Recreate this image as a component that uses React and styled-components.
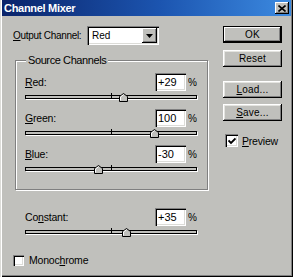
import React from 'react';
import styled, { createGlobalStyle } from 'styled-components';

const FACE = '#c0c0bc';

const Global = createGlobalStyle`
  html, body { margin: 0; padding: 0; background: ${FACE}; }
  body {
    font-family: "Liberation Sans", Arial, sans-serif;
    font-size: 10px;
    color: #000;
  }
  * { box-sizing: border-box; }
`;

const Window = styled.div`
  width: 293px;
  height: 277px;
  background: ${FACE};
  padding: 0 2px 2px 2px;
  box-shadow: inset 1px 0 0 #dcdcd8, inset 2px 0 0 #fff, inset -1px -1px 0 #000,
    inset -2px -2px 0 #808080;
  display: flex;
  flex-direction: column;
`;

const TitleBar = styled.div`
  height: 16px;
  flex: none;
  background: linear-gradient(90deg, #0a246a 0%, #1c55b0 55%, #3c8ae0 100%);
  display: flex;
  align-items: center;
  justify-content: space-between;
  padding: 0 2px 0 2px;
`;

const Title = styled.span`
  color: #fff;
  font-weight: bold;
  font-size: 11px;
  letter-spacing: -0.3px;
`;

const CloseBtn = styled.div`
  width: 14px;
  height: 12px;
  background: ${FACE};
  box-shadow: inset -1px -1px 0 #000, inset 1px 1px 0 #fff, inset -2px -2px 0 #808080;
  display: flex;
  align-items: center;
  justify-content: center;
`;

const Body = styled.div`
  flex: 1;
  display: flex;
`;

const LeftCol = styled.div`
  width: 218px;
  padding: 10px 0 0 11px;
  display: flex;
  flex-direction: column;
`;

const OutputRow = styled.div`
  display: flex;
  align-items: center;
  height: 19px;
`;

const OutputLabel = styled.span`
  width: 74px;
  letter-spacing: -0.3px;
`;

const Select = styled.div`
  width: 72px;
  height: 19px;
  background: #fff;
  box-shadow: inset 1px 1px 0 #808080, inset 2px 2px 0 #000, inset -1px -1px 0 #fff,
    inset -2px -2px 0 #dcdcd8;
  display: flex;
  align-items: center;
  padding: 2px 2px 2px 5px;
`;

const SelectText = styled.span`
  flex: 1;
  font-size: 10px;
`;

const ArrowBtn = styled.div`
  width: 15px;
  height: 15px;
  background: ${FACE};
  box-shadow: inset -1px -1px 0 #000, inset 1px 1px 0 #fff, inset -2px -2px 0 #808080;
  display: flex;
  align-items: center;
  justify-content: center;
`;

const GroupBox = styled.div`
  margin: 15px 0 0 2px;
  width: 193px;
  border: 1px solid #808080;
  box-shadow: 1px 1px 0 #fff, inset 1px 1px 0 #fff;
  padding: 0 10px 8px 9px;
  display: flex;
  flex-direction: column;
`;

const Legend = styled.div`
  margin: -7px 0 0 1px;
  width: fit-content;
  padding: 0 2px;
  background: ${FACE};
  line-height: 13px;
  font-size: 11px;
  letter-spacing: -0.4px;
`;

const ChannelList = styled.div`
  margin-top: 6px;
  display: flex;
  flex-direction: column;
`;

const Block = styled.div`
  display: flex;
  flex-direction: column;
  width: 172px;
  margin-left: ${(p) => p.$indent || 0}px;
  margin-top: ${(p) => p.$top || 0}px;
`;

const Row = styled.div`
  display: flex;
  align-items: center;
  height: 18px;
`;

const Label = styled.span`
  flex: 1;
  font-size: 10.5px;
  letter-spacing: -0.2px;
`;

const ValueBox = styled.div`
  width: 31px;
  height: 18px;
  background: #fff;
  box-shadow: inset 1px 1px 0 #808080, inset 2px 2px 0 #000, inset -1px -1px 0 #fff,
    inset -2px -2px 0 #dcdcd8;
  padding: 2px 0 0 3px;
  font-size: 11px;
  line-height: 14px;
`;

const Percent = styled.span`
  width: 11px;
  text-align: right;
  font-size: 10px;
`;

const Slider = styled.div`
  position: relative;
  height: 16px;
  margin-top: 2px;
  padding-top: 2px;
`;

const Track = styled.div`
  height: 4px;
  background: ${FACE};
  border: 1px solid #000;
  box-shadow: 1px 1px 0 #fff;
`;

const Tick = styled.div`
  position: absolute;
  left: 50%;
  top: 0;
  width: 1px;
  height: 6px;
  background: #000;
`;

const Thumb = styled.svg`
  position: absolute;
  top: 0;
  width: 9px;
  height: 9px;
  margin-left: -4px;
`;

const MonoRow = styled.div`
  margin-top: 10px;
  display: flex;
  align-items: center;
  gap: 5px;
`;

const CheckBox = styled.div`
  width: ${(p) => p.$size}px;
  height: ${(p) => p.$size}px;
  background: #fff;
  box-shadow: inset 1px 1px 0 #808080, inset 2px 2px 0 #000, inset -1px -1px 0 #fff,
    inset -2px -2px 0 #dcdcd8;
  display: flex;
  align-items: center;
  justify-content: center;
`;

const CheckLabel = styled.span`
  font-size: 10.5px;
  letter-spacing: -0.2px;
`;

const RightCol = styled.div`
  padding: 10px 0 0 3px;
  display: flex;
  flex-direction: column;
`;

const Button = styled.div`
  width: 59px;
  height: 17px;
  margin-top: ${(p) => p.$top || 0}px;
  background: ${FACE};
  display: flex;
  align-items: center;
  justify-content: center;
  font-size: 10px;
  letter-spacing: 0.2px;
  box-shadow: ${(p) =>
    p.$default
      ? 'inset 0 0 0 1px #000, inset -2px -2px 0 #000, inset 2px 2px 0 #fff, inset -3px -3px 0 #808080'
      : 'inset -1px -1px 0 #000, inset 1px 1px 0 #fff, inset -2px -2px 0 #808080, inset 2px 2px 0 #e4e4e0'};
`;

const PreviewRow = styled.div`
  margin-top: 13px;
  margin-left: 2px;
  display: flex;
  align-items: center;
  gap: 4px;
`;

const channels = [
  { name: 'R', rest: 'ed:', value: 29, text: '+29' },
  { name: 'G', rest: 'reen:', value: 100, text: '100' },
  { name: 'B', rest: 'lue:', value: -30, text: '-30' },
];

function SliderBar({ value }) {
  const pct = ((value + 200) / 400) * 100;
  return (
    <Slider>
      <Track />
      <Tick />
      <Thumb viewBox="0 0 9 9" style={{ left: `${pct}%` }}>
        <path d="M0.5 8.5 V3.5 L4.5 0.5 L8.5 3.5 V8.5 Z" fill="#c0c0bc" stroke="#000" />
        <path d="M1.5 7.5 V4 L4.5 1.7" fill="none" stroke="#fff" />
      </Thumb>
    </Slider>
  );
}

function Channel({ label, value, text, indent, top }) {
  return (
    <Block $indent={indent} $top={top}>
      <Row>
        <Label>{label}</Label>
        <ValueBox>{text}</ValueBox>
        <Percent>%</Percent>
      </Row>
      <SliderBar value={value} />
    </Block>
  );
}

const CheckMark = () => (
  <svg width="8" height="8" viewBox="0 0 8 8">
    <path d="M0.5 3.5 L3 6 L7.5 1.5" fill="none" stroke="#000" strokeWidth="1.8" />
  </svg>
);

export default function App() {
  return (
    <>
      <Global />
      <Window>
        <TitleBar>
          <Title>Channel Mixer</Title>
          <CloseBtn>
            <svg width="8" height="7" viewBox="0 0 8 7">
              <path d="M0.5 0.5 L7.5 6.5 M7.5 0.5 L0.5 6.5" stroke="#000" strokeWidth="1.6" />
            </svg>
          </CloseBtn>
        </TitleBar>
        <Body>
          <LeftCol>
            <OutputRow>
              <OutputLabel>
                <u>O</u>utput Channel:
              </OutputLabel>
              <Select>
                <SelectText>Red</SelectText>
                <ArrowBtn>
                  <svg width="7" height="4" viewBox="0 0 7 4">
                    <path d="M0 0 H7 L3.5 4 Z" fill="#000" />
                  </svg>
                </ArrowBtn>
              </Select>
            </OutputRow>
            <GroupBox>
              <Legend>Source Channels</Legend>
              <ChannelList>
                {channels.map((c) => (
                  <Channel
                    key={c.name}
                    label={
                      <>
                        <u>{c.name}</u>
                        {c.rest}
                      </>
                    }
                    value={c.value}
                    text={c.text}
                  />
                ))}
              </ChannelList>
            </GroupBox>
            <Channel
              label={
                <>
                  Co<u>n</u>stant:
                </>
              }
              value={35}
              text="+35"
              indent={12}
              top={18}
            />
            <MonoRow>
              <CheckBox $size={11} />
              <CheckLabel>
                Monoc<u>h</u>rome
              </CheckLabel>
            </MonoRow>
          </LeftCol>
          <RightCol>
            <Button $default>OK</Button>
            <Button $top={7}>Reset</Button>
            <Button $top={14}>
              <span>
                <u>L</u>oad...
              </span>
            </Button>
            <Button $top={6}>
              <span>
                <u>S</u>ave...
              </span>
            </Button>
            <PreviewRow>
              <CheckBox $size={13}>
                <CheckMark />
              </CheckBox>
              <CheckLabel>
                <u>P</u>review
              </CheckLabel>
            </PreviewRow>
          </RightCol>
        </Body>
      </Window>
    </>
  );
}
